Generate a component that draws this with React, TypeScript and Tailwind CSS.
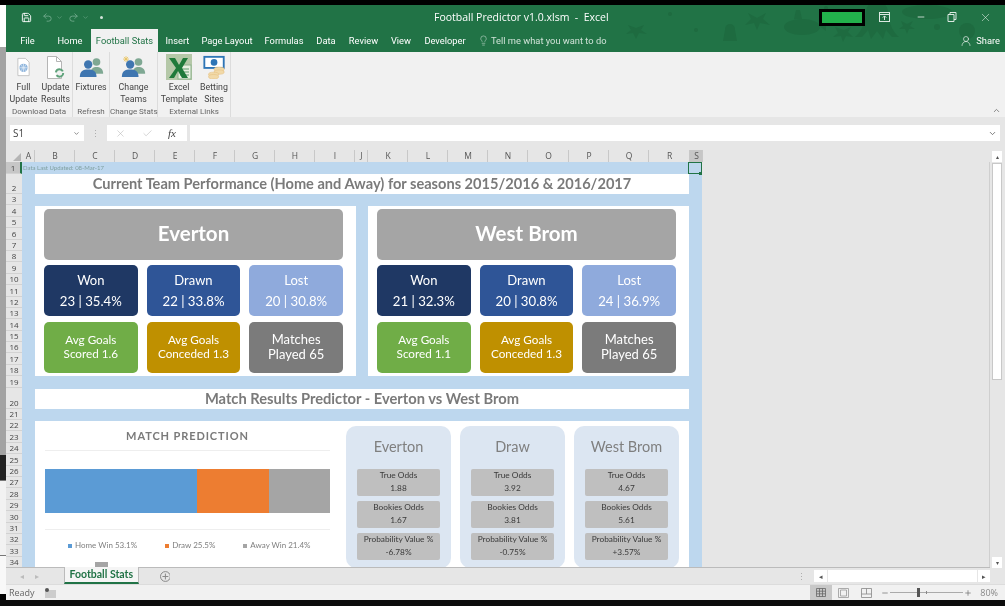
import { ChevronDown, ChevronUp, Lightbulb, Minus, Plus, Redo2, Save, Undo2, UserRound, X, Check } from 'lucide-react';

const tabs = [
  { label: 'File', w: 'w-[43px]' },
  { label: 'Home', w: 'w-[42px]' },
  { label: 'Football Stats', w: 'w-[67px]', active: true },
  { label: 'Insert', w: 'w-[39px]' },
  { label: 'Page Layout', w: 'w-[60px]' },
  { label: 'Formulas', w: 'w-[54px]' },
  { label: 'Data', w: 'w-[30px]' },
  { label: 'Review', w: 'w-[45px]' },
  { label: 'View', w: 'w-[30px]' },
  { label: 'Developer', w: 'w-[58px]' },
];

const columns = [
  ['A', 'w-[13px]'], ['B', 'w-[40px]'], ['C', 'w-[40px]'], ['D', 'w-[40px]'], ['E', 'w-[40px]'],
  ['F', 'w-[40px]'], ['G', 'w-[40px]'], ['H', 'w-[40px]'], ['I', 'w-[40px]'], ['J', 'w-[13px]'],
  ['K', 'w-[40px]'], ['L', 'w-[40px]'], ['M', 'w-[40px]'], ['N', 'w-[40px]'], ['O', 'w-[41px]'],
  ['P', 'w-[40px]'], ['Q', 'w-[40px]'], ['R', 'w-[41px]'], ['S', 'w-[13px]'],
];

const rows = Array.from({ length: 34 }, (_, i) => i + 1);

const teams = [
  { name: 'Everton', won: '23 | 35.4%', drawn: '22 | 33.8%', lost: '20 | 30.8%', scored: '1.6', conceded: '1.3' },
  { name: 'West Brom', won: '21 | 32.3%', drawn: '20 | 30.8%', lost: '24 | 36.9%', scored: '1.1', conceded: '1.3' },
];

const odds = [
  { name: 'Everton', t: '1.88', b: '1.67', p: '-6.78%' },
  { name: 'Draw', t: '3.92', b: '3.81', p: '-0.75%' },
  { name: 'West Brom', t: '4.67', b: '5.61', p: '+3.57%' },
];

const People = ({ sun }: { sun?: boolean }) => (
  <svg width="25" height="22" viewBox="0 0 30 26">
    {sun && <path d="M6 0v7M2.5 3.5h7M3.5 1l5 5M8.5 1l-5 5" stroke="#e8c25a" strokeWidth="1" />}
    <circle cx="21" cy="7" r="4.6" fill="#7fa893" />
    <path d="M14 21c0-6 3-8 7-8s8 2 8 8z" fill="#7fa893" />
    <circle cx="11" cy="10" r="5" fill="#3f76b0" />
    <path d="M1 25c0-7 4-9 10-9s10 2 10 9z" fill="#3f76b0" />
  </svg>
);

const FullIcon = () => (
  <svg width="15" height="20" viewBox="0 0 20 26">
    <path d="M2.5 1.5h10l5 5v18h-15z" fill="#fff" stroke="#b5b5b5" />
    <circle cx="10" cy="14" r="5.5" fill="#8db4dc" />
    <path d="M4.5 14h11M10 8.5v11M7 10c2 3 2 5 0 8M13 10c-2 3-2 5 0 8" stroke="#fff" strokeWidth=".7" fill="none" />
  </svg>
);

const UpdateIcon = () => (
  <svg width="19" height="23" viewBox="0 0 19 23">
    <path d="M1.5 .5h9l5 5v17h-14z" fill="#fff" stroke="#b5b5b5" />
    <path d="M10.5 .5v5h5" fill="none" stroke="#b5b5b5" />
    <circle cx="13.5" cy="17" r="3.7" fill="#f1f1f1" stroke="#5ea27a" strokeWidth="2" strokeDasharray="9 3" />
  </svg>
);

const ExcelIcon = () => (
  <svg width="26" height="26" viewBox="0 0 26 26">
    <rect width="26" height="26" fill="#b5c8a8" />
    <rect x="12" y="11" width="13" height="14" fill="#e8f0e0" stroke="#8db28e" />
    <path d="M14 15h9M14 18h9M14 21h9" stroke="#5f9c6c" />
    <path d="M3 4h6l4 7 4-7h5l-6 10 6 10h-6l-4-7-4 7H3l7-10z" fill="#1f7a3a" />
  </svg>
);

const BettingIcon = () => (
  <svg width="23" height="24" viewBox="0 0 24 26">
    <rect x="1" y="2" width="21" height="12" fill="#fff" stroke="#2e75b6" strokeWidth="2" />
    <circle cx="11.5" cy="8" r="3.6" fill="#2e75b6" />
    <ellipse cx="17" cy="15.5" rx="5.5" ry="2.4" fill="#f1d9a8" stroke="#e5bf80" strokeWidth=".6" />
    <ellipse cx="17" cy="18.5" rx="5.5" ry="2.4" fill="#f1d9a8" stroke="#e5bf80" strokeWidth=".6" />
    <ellipse cx="11" cy="21" rx="5.5" ry="2.4" fill="#f1d9a8" stroke="#e5bf80" strokeWidth=".6" />
    <ellipse cx="11" cy="23.5" rx="5.5" ry="2.4" fill="#f1d9a8" stroke="#e5bf80" strokeWidth=".6" />
  </svg>
);

const RibbonButton = ({ icon, lines, w }: { icon: React.ReactNode; lines: string[]; w: string }) => (
  <div className={`${w} flex flex-col items-center`}>
    <div className="h-[28px] flex items-center justify-center">{icon}</div>
    <div className="text-[8.8px] leading-[12px] text-[#444] text-center whitespace-nowrap">
      {lines.map(l => <div key={l}>{l}</div>)}
    </div>
  </div>
);

const RibbonGroup = ({ label, w, children }: { label: string; w: string; children: React.ReactNode }) => (
  <div className={`${w} h-full flex flex-col border-r border-[#dcdcdc]`}>
    <div className="h-[55px] flex justify-center pt-[1px]">{children}</div>
    <div className="text-[8px] leading-[10px] text-[#666] text-center whitespace-nowrap">{label}</div>
  </div>
);

const StatCard = ({ bg, children, big }: { bg: string; children: React.ReactNode; big?: boolean }) => (
  <div className={`${bg} rounded-[5px] h-[51px] flex flex-col items-center justify-center text-white ${big ? 'text-[13px] leading-[15px] pb-[2px]' : 'text-[11.7px] leading-[14px] pb-[3px]'}`}>
    {children}
  </div>
);

const ResultCard = ({ bg, label, value }: { bg: string; label: string; value: string }) => (
  <div className={`${bg} rounded-[5px] h-[51px] flex flex-col items-center justify-center text-white`}>
    <div className="text-[13px] leading-[21px]">{label}</div>
    <div className="text-[13.2px] leading-[21px]">{value}</div>
  </div>
);

const TeamPanel = ({ team }: { team: typeof teams[number] }) => (
  <div className="w-[321px] h-[170px] bg-white pl-[9px] pr-[13px] pt-[3px]">
    <div className="h-[51px] rounded-[5px] bg-[#a5a5a5] flex items-center justify-center text-white text-[20.5px] font-bold pb-[3px]">{team.name}</div>
    <div className="grid grid-cols-3 gap-x-[9px] mt-[5px]">
      <ResultCard bg="bg-[#1f3864]" label="Won" value={team.won} />
      <ResultCard bg="bg-[#2f5597]" label="Drawn" value={team.drawn} />
      <ResultCard bg="bg-[#8faadc]" label="Lost" value={team.lost} />
    </div>
    <div className="grid grid-cols-3 gap-x-[9px] mt-[6px]">
      <StatCard bg="bg-[#70ad47]">
        <div>Avg Goals</div>
        <div>Scored {team.scored}</div>
      </StatCard>
      <StatCard bg="bg-[#bf9000]">
        <div>Avg Goals</div>
        <div>Conceded {team.conceded}</div>
      </StatCard>
      <StatCard bg="bg-[#7b7b7b]" big>
        <div>Matches</div>
        <div>Played 65</div>
      </StatCard>
    </div>
  </div>
);

const OddsBox = ({ label, value }: { label: string; value: string }) => (
  <div className="h-[27px] rounded-[2px] bg-[#bfbfbf] flex flex-col items-center justify-center pb-[1px] text-[8.3px] leading-[13px] text-[#3a3a3a]">
    <div className="whitespace-nowrap">{label}</div>
    <div>{value}</div>
  </div>
);

const LegendItem = ({ color, label }: { color: string; label: string }) => (
  <div className="flex items-center gap-[3px] text-[8px] leading-[13px] text-[#7f7f7f] whitespace-nowrap">
    <span className={`w-[4px] h-[4px] ${color}`} />
    {label}
  </div>
);

const App = () => (
  <div className="w-[1005px] h-[606px] bg-[#0c0c0c] overflow-hidden flex flex-col blur-[0.4px] [font-family:Lato,'Open_Sans',sans-serif]">
    <div className="h-[5px] bg-black shrink-0" />
    <div className="flex h-[595px] shrink-0">

      {/* desktop sliver on the left */}
      <div className="w-[6px] shrink-0 flex flex-col">
        <div className="h-[42px] bg-white" />
        <div className="h-[408px] bg-[#a3a3a3]" />
        <div className="h-[25px] bg-[#222]" />
        <div className="h-[76px] bg-[#f2f2f2] border-y border-[#777]" />
        <div className="flex-1 bg-[#f8f8f8]" />
        <div className="h-[6px] bg-black" />
      </div>

      <div className="w-[999px] flex flex-col">
        {/* Title bar */}
        <div className="relative h-[47px] bg-[#217346] text-white shrink-0 overflow-hidden">
          <svg className="absolute inset-0" width="999" height="47" viewBox="0 0 999 47">
            <g fill="#1e6b40">
              {/* small crab */}
              <path d="M622 20l8 3 8-3-3 5 6 4-8-1-3 6-3-6-7 1 5-4z" />
              <circle cx="664" cy="9" r="2" />
              <circle cx="690" cy="25" r="2" />
              {/* squid */}
              <circle cx="724" cy="24" r="5" />
              <path d="M719 25h10l2 11h-14z" />
              {/* crab */}
              <path d="M742 8l9 5 9-5-3 6 7 6-10-2-3 7-3-7-9 2 6-6z" />
              {/* submarine */}
              <ellipse cx="796" cy="22" rx="18" ry="8" />
              <path d="M788 14l2-9h4l2 9zM812 20l8-3v9z" />
              {/* crab under the sub */}
              <path d="M829 22l9 3 7-3-3 5 5 5-7-1-3 6-2-6-8 1 5-4z" />
              {/* octopus */}
              <circle cx="871" cy="7" r="11" />
              <path d="M860 8c-1 12-6 20-11 24h7l6-7 3 9 6-8 6 8 3-9 6 7h7c-5-4-10-12-11-24z" />
              <path d="M895 16l6 3 6-3-3 5 5 3-6 0-2 5-2-5-6 0 4-3z" />
              <ellipse cx="921" cy="7" rx="25" ry="7" />
              <circle cx="931" cy="22" r="3" />
              <circle cx="961" cy="26" r="8" />
              <circle cx="820" cy="3" r="2" />
            </g>
          </svg>
          <div className="relative h-[24px] flex items-center">
            <div className="w-[428px] flex items-center">
              <Save size={11} className="ml-[15px] text-white" />
              <Undo2 size={11} className="ml-[10px] text-[#6fa98a]" />
              <ChevronDown size={7} className="ml-[3px] text-[#6fa98a]" />
              <Redo2 size={11} className="ml-[5px] text-[#6fa98a]" />
              <ChevronDown size={7} className="ml-[3px] text-[#6fa98a]" />
              <span className="ml-[11px] w-[3px] h-[3px] rounded-full bg-white/80" />
            </div>
            <div className="w-[385px] text-[10.5px] leading-[14px] whitespace-nowrap [font-family:'Open_Sans',sans-serif]">Football Predictor v1.0.xlsm&nbsp; -&nbsp; Excel</div>
            <div className="w-[46px] h-[17px] bg-[#22b14c] border-[3px] border-black" />
            <svg className="ml-[14px]" width="11" height="10" viewBox="0 0 11 10">
              <rect x=".5" y=".5" width="10" height="9" fill="none" stroke="#dce9e2" />
              <path d="M.5 2.5h10M5.5 8V4M3.8 5.6l1.7-1.7 1.7 1.7" stroke="#dce9e2" fill="none" />
            </svg>
            <Minus size={10} className="ml-[26px] text-[#dce9e2]" />
            <svg className="ml-[21px]" width="10" height="10" viewBox="0 0 10 10">
              <path d="M1 2.5h6v7H1zM3 2.5V.5h6v7H7" fill="none" stroke="#dce9e2" />
            </svg>
            <X size={13} strokeWidth={1} className="ml-[22px] text-[#eef5f1]" />
          </div>
          <div className="relative h-[23px] flex items-end text-[9.3px] [font-family:Roboto,sans-serif]">
            <div className="flex h-[23px] items-stretch">
              {tabs.map(t => (
                <div
                  key={t.label}
                  className={`${t.w} flex items-center justify-center whitespace-nowrap ${t.active ? 'bg-[#f1f1f1] text-[#217346]' : 'text-white'}`}
                >
                  {t.label}
                </div>
              ))}
            </div>
            <div className="h-[23px] flex items-center ml-[4px] text-[#cfe2d7]">
              <Lightbulb size={11} strokeWidth={1.2} />
              <span className="ml-[2px]">Tell me what you want to do</span>
            </div>
            <div className="ml-auto h-[23px] flex items-center mr-[5px] text-white">
              <UserRound size={12} strokeWidth={1.2} />
              <span className="ml-[4px]">Share</span>
            </div>
          </div>
        </div>

        {/* Ribbon */}
        <div className="h-[65px] bg-[#f1f1f1] flex shrink-0 relative [font-family:Roboto,sans-serif]">
          <RibbonGroup label="Download Data" w="w-[67px]">
            <RibbonButton icon={<FullIcon />} lines={['Full', 'Update']} w="w-[33px]" />
            <RibbonButton icon={<UpdateIcon />} lines={['Update', 'Results']} w="w-[31px]" />
          </RibbonGroup>
          <RibbonGroup label="Refresh" w="w-[37px]">
            <RibbonButton icon={<People />} lines={['Fixtures']} w="w-[36px]" />
          </RibbonGroup>
          <RibbonGroup label="Change Stats" w="w-[48px]">
            <RibbonButton icon={<People sun />} lines={['Change', 'Teams']} w="w-[44px]" />
          </RibbonGroup>
          <RibbonGroup label="External Links" w="w-[73px]">
            <RibbonButton icon={<ExcelIcon />} lines={['Excel', 'Template']} w="w-[40px]" />
            <RibbonButton icon={<BettingIcon />} lines={['Betting', 'Sites']} w="w-[30px]" />
          </RibbonGroup>
          <ChevronUp size={9} className="absolute right-[4px] bottom-[2px] text-[#666]" />
        </div>

        {/* Formula bar */}
        <div className="h-[33px] bg-[#e6e6e6] shrink-0 flex items-center pb-[1px] text-[#444]">
          <div className="ml-[4px] w-[74px] h-[16px] bg-white flex items-center justify-between px-[3px] text-[10px] [font-family:'Open_Sans',sans-serif]">
            S1
            <ChevronDown size={7} className="mr-[1px]" />
          </div>
          <div className="w-[23px] text-center text-[#aaa] text-[9px] leading-none">⋮</div>
          <div className="w-[80px] h-[16px] bg-white flex items-center pl-[8px] text-[#b5b5b5]">
            <X size={11} strokeWidth={1.2} />
            <Check size={11} strokeWidth={1.2} className="ml-[16px]" />
            <span className="ml-[15px] text-[#444] italic text-[11px] [font-family:'Liberation_Serif',serif]">fx</span>
          </div>
          <div className="ml-[3px] w-[810px] h-[16px] bg-white flex items-center justify-end pr-[3px]">
            <ChevronDown size={9} className="text-[#555]" />
          </div>
        </div>

        {/* Grid */}
        <div className="flex-1 min-h-0 flex bg-[#e6e6e6]">
          <div className="w-[984px] flex flex-col">
            <div className="flex h-[12px] shrink-0 text-[8.5px] leading-[12px] text-[#555] [font-family:'Open_Sans',sans-serif]">
              <div className="w-[16px] relative">
                <svg className="absolute right-[1px] bottom-[1px]" width="8" height="8" viewBox="0 0 8 8"><path d="M8 0v8H0z" fill="#b5b5b5" /></svg>
              </div>
              {columns.map(([c, w]) => (
                <div key={c} className={`${w} pl-[1px] text-center border-r border-[#c8c8c8] ${c === 'S' ? 'bg-[#c6c6c6]' : ''}`}>{c}</div>
              ))}
            </div>
            <div className="flex h-[405px] overflow-hidden border-r border-[#cfcfcf]">
              <div className="w-[16px] shrink-0 text-[8px] text-[#444] text-center [font-family:'Open_Sans',sans-serif]">
                {rows.map(r => (
                  <div
                    key={r}
                    className={`flex items-end justify-center border-b border-[#d2d2d2] ${r === 1 ? 'bg-[#c6c6c6] h-[12px] border-r-2 border-r-[#217346]' : r === 2 ? 'h-[20px]' : r === 20 ? 'h-[21px]' : 'h-[11.4px]'}`}
                  >
                    <span className="leading-[10px]">{r}</span>
                  </div>
                ))}
              </div>
              <div className="w-[680px] shrink-0 bg-[#bdd7ee] pl-[13px]">
                <div className="h-[12px] relative text-[6px] leading-[12px] text-[#7f9f9f] -ml-[13px] pl-[1px] whitespace-nowrap">
                  Data Last Updated: 08-Mar-17
                  <div className="absolute right-0 top-0 w-[14px] h-[12px] border border-[#217346]" />
                  <div className="absolute right-0 -bottom-[1px] w-[3px] h-[3px] bg-[#217346]" />
                </div>
                <div className="w-[654px] h-[20px] bg-white flex items-center justify-center text-[14.6px] font-bold text-[#7a7a7a]">Current Team Performance (Home and Away) for seasons 2015/2016 &amp; 2016/2017</div>
                <div className="flex w-[654px] justify-between mt-[12px]">
                  {teams.map(t => <TeamPanel key={t.name} team={t} />)}
                </div>
                <div className="w-[654px] h-[20px] mt-[13px] pb-[1px] bg-white flex items-center justify-center text-[14.7px] font-bold text-[#7a7a7a]">Match Results Predictor - Everton vs West Brom</div>
                <div className="w-[654px] h-[146px] mt-[12px] bg-white flex overflow-hidden">
                  <div className="w-[311px] pl-[10px] shrink-0">
                    <div className="w-[285px] h-[30px] border-b border-[#eeeeee] text-center text-[11px] font-bold tracking-[0.9px] leading-[30px] text-[#7a7a7a]">MATCH PREDICTION</div>
                    <div className="w-[285px] h-[44px] mt-[18px] flex">
                      <div className="w-[152px] bg-[#5b9bd5]" />
                      <div className="w-[72px] bg-[#ed7d31]" />
                      <div className="flex-1 bg-[#a5a5a5]" />
                    </div>
                    <div className="w-[285px] h-[17px] border-b border-[#eeeeee]" />
                    <div className="w-[285px] flex pl-[23px] gap-[28px] mt-[9px]">
                      <LegendItem color="bg-[#5b9bd5]" label="Home Win 53.1%" />
                      <LegendItem color="bg-[#ed7d31]" label="Draw 25.5%" />
                      <LegendItem color="bg-[#a5a5a5]" label="Away Win 21.4%" />
                    </div>
                    <div className="ml-[50px] mt-[10px] w-[13px] h-[6px] bg-[#a5a5a5]" />
                  </div>
                  <div className="flex gap-[9px] pt-[5px]">
                    {odds.map(o => (
                      <div key={o.name} className="w-[105px] h-[142px] rounded-[10px] bg-[#dce6f2] px-[11px]">
                        <div className="h-[43px] flex items-center justify-center text-[14.5px] text-[#7f7f7f] whitespace-nowrap pb-[2px]">{o.name}</div>
                        <div className="flex flex-col gap-[5px]">
                          <OddsBox label="True Odds" value={o.t} />
                          <OddsBox label="Bookies Odds" value={o.b} />
                          <OddsBox label="Probability Value %" value={o.p} />
                        </div>
                      </div>
                    ))}
                  </div>
                </div>
              </div>
              <div className="flex-1" />
            </div>

            {/* Sheet tabs */}
            <div className="h-[17px] shrink-0 bg-[#e6e6e6] border-t border-[#bbb] flex items-center text-[#bbb]">
              <span className="ml-[14px] text-[8px]">◂</span>
              <span className="ml-[11px] text-[8px]">▸</span>
              <div className="ml-[25px] w-[76px] h-[17px] -mt-[1px] bg-[#f5f5f5] border-x border-[#bbb] border-b-2 border-b-[#217346] text-[#217346] text-[10.5px] font-bold flex items-center justify-center whitespace-nowrap">Football Stats</div>
              <svg className="ml-[21px]" width="11" height="11" viewBox="0 0 11 11">
                <circle cx="5.5" cy="5.5" r="5" fill="none" stroke="#888" />
                <path d="M5.5 2.5v6M2.5 5.5h6" stroke="#888" />
              </svg>
              <span className="ml-[627px] text-[#aaa] text-[9px] leading-none">⋮</span>
              <div className="ml-[8px] w-[13px] h-[12px] bg-white flex items-center justify-center text-[#555] text-[7px]">◂</div>
              <div className="ml-[1px] w-[152px] h-[12px] bg-white" />
              <div className="ml-[1px] w-[12px] h-[12px] bg-white flex items-center justify-center text-[#555] text-[7px]">▸</div>
            </div>
          </div>

          {/* Vertical scrollbar */}
          <div className="w-[15px] flex flex-col pt-[1px] pl-[2px] pr-[3px] h-[418px] text-[#555]">
            <div className="h-[11px] bg-white flex items-center justify-center text-[6px]">▴</div>
            <div className="h-[217px] mt-[1px] bg-white border border-[#c8c8c8]" />
            <div className="flex-1" />
            <div className="h-[11px] bg-white flex items-center justify-center text-[6px]">▾</div>
          </div>
        </div>

        {/* Status bar */}
        <div className="h-[16px] shrink-0 bg-[#f1f1f1] border-t border-[#dcdcdc] flex items-center text-[9px] text-[#666] [font-family:'Open_Sans',sans-serif]">
          <span className="ml-[3px]">Ready</span>
          <svg className="ml-[10px]" width="11" height="10" viewBox="0 0 11 10">
            <path d="M3 2h8v8H0V2z" fill="#ccc" />
            <circle cx="2" cy="2" r="2" fill="#555" />
          </svg>
          <div className="ml-auto flex items-center">
            <div className="w-[22px] h-[15px] bg-[#c8c8c8] flex items-center justify-center">
              <svg width="10" height="9" viewBox="0 0 10 9"><path d="M.5.5h9v8h-9zM.5 3.2h9M.5 5.8h9M3.5.5v8M6.5.5v8" fill="none" stroke="#666" strokeWidth=".8" /></svg>
            </div>
            <svg className="ml-[6px]" width="11" height="10" viewBox="0 0 11 10"><path d="M.5.5h10v9H.5zM2.5 2h6v6h-6z" fill="none" stroke="#999" strokeWidth=".8" /></svg>
            <svg className="ml-[12px]" width="11" height="10" viewBox="0 0 11 10"><path d="M.5.5h10v9H.5zM.5 6h10M5.5.5V6" fill="none" stroke="#888" strokeWidth=".8" /></svg>
            <Minus size={8} strokeWidth={2} className="ml-[9px] text-[#666]" />
            <div className="relative w-[73px] h-px bg-[#aaa] ml-[1px]">
              <div className="absolute left-[27px] -top-[4px] w-[3px] h-[9px] bg-[#555]" />
              <div className="absolute left-[36px] -top-[1px] w-px h-[3px] bg-[#888]" />
            </div>
            <Plus size={8} strokeWidth={2} className="ml-[1px] text-[#666]" />
            <span className="ml-[8px] mr-[7px] text-[#888]">80%</span>
          </div>
        </div>
      </div>
    </div>
  </div>
);

export default App;
